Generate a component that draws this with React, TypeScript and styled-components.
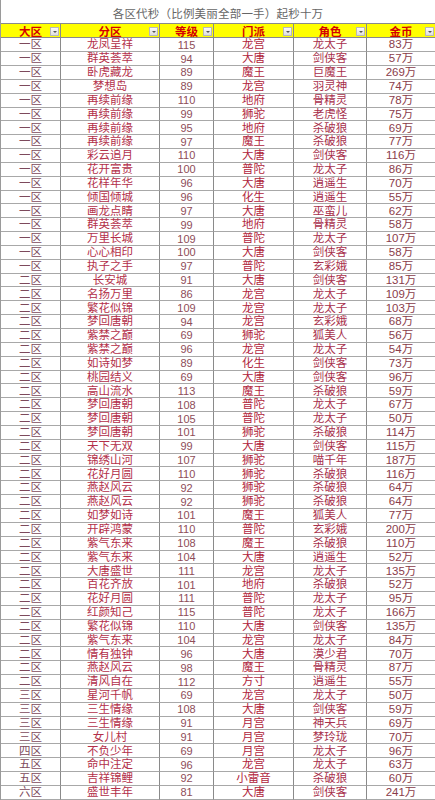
import styled, { createGlobalStyle } from "styled-components";

const GlobalStyle = createGlobalStyle`
  html, body {
    margin: 0;
    padding: 0;
    background: #ffffff;
  }
  body {
    font-family: "Liberation Sans", "Noto Sans CJK SC", sans-serif;
  }
`;

// 表格外框
const Sheet = styled.div`
  width: 435px;
  display: grid;
  grid-template-columns: 60px 99px 54px 80px 73px 69px;
  grid-template-rows: 24px 14.3px;
  grid-auto-rows: 13.85px;
  border-left: 1px solid #9a9a9a;
  box-sizing: border-box;
  overflow: hidden;
  height: 800px;
`;

// 标题
const Title = styled.div`
  grid-column: 1 / -1;
  display: flex;
  align-items: center;
  justify-content: center;
  padding-top: 3px;
  box-sizing: border-box;
  border-right: 1px solid #9a9a9a;
  border-bottom: 1px solid #8a8a8a;
  color: #666666;
  font-size: 11.5px;
  letter-spacing: 0.2px;
`;

// 表头
const HeadCell = styled.div`
  position: relative;
  display: flex;
  align-items: center;
  justify-content: center;
  background: #ffff00;
  color: #d40000;
  font-weight: bold;
  font-size: 11.5px;
  border-right: 1px solid #8a8a8a;
  border-bottom: 1px solid #8a8a8a;
  box-sizing: border-box;
`;

// 筛选按钮
const FilterButton = styled.span`
  position: absolute;
  right: 1px;
  top: 3px;
  width: 9px;
  height: 9px;
  box-sizing: border-box;
  border: 1px solid #b8b8b8;
  background: linear-gradient(#fafafa, #dedede);
  display: flex;
  align-items: center;
  justify-content: center;

  &::after {
    content: "";
    border-left: 2px solid transparent;
    border-right: 2px solid transparent;
    border-top: 2px solid #555;
  }
`;

// 单元格
const Cell = styled.div<{ $color: string; $num?: boolean }>`
  display: flex;
  align-items: center;
  justify-content: center;
  color: ${(p) => p.$color};
  font-size: ${(p) => (p.$num ? "11px" : "11.5px")};
  line-height: 1;
  white-space: nowrap;
  border-right: 1px solid #8a8a8a;
  border-bottom: 1px solid #a8a8a8;
  box-sizing: border-box;
  padding-top: 1px;
`;

type Row = [string, string, number, string, string, string];

const headers = ["大区", "分区", "等级", "门派", "角色", "金币"];
const colColors = ["#7d4a5c", "#b3304a", "#8e4d58", "#b0253c", "#a8304c", "#8a3c4a"];

const rows: Row[] = [
  ["一区", "龙凤呈祥", 115, "龙宫", "龙太子", "83万"],
  ["一区", "群英荟萃", 94, "大唐", "剑侠客", "57万"],
  ["一区", "卧虎藏龙", 89, "魔王", "巨魔王", "269万"],
  ["一区", "梦想岛", 89, "龙宫", "羽灵神", "74万"],
  ["一区", "再续前缘", 110, "地府", "骨精灵", "78万"],
  ["一区", "再续前缘", 99, "狮驼", "老虎怪", "75万"],
  ["一区", "再续前缘", 95, "地府", "杀破狼", "69万"],
  ["一区", "再续前缘", 97, "魔王", "杀破狼", "77万"],
  ["一区", "彩云追月", 110, "大唐", "剑侠客", "116万"],
  ["一区", "花开富贵", 100, "普陀", "龙太子", "86万"],
  ["一区", "花样年华", 96, "大唐", "逍遥生", "70万"],
  ["一区", "倾国倾城", 96, "化生", "逍遥生", "55万"],
  ["一区", "画龙点睛", 97, "大唐", "巫蛮儿", "62万"],
  ["一区", "群英荟萃", 99, "地府", "骨精灵", "58万"],
  ["一区", "万里长城", 109, "普陀", "龙太子", "107万"],
  ["一区", "心心相印", 100, "大唐", "剑侠客", "58万"],
  ["一区", "执子之手", 97, "普陀", "玄彩娥", "85万"],
  ["二区", "长安城", 91, "大唐", "剑侠客", "131万"],
  ["二区", "名扬万里", 86, "龙宫", "龙太子", "109万"],
  ["二区", "繁花似锦", 109, "龙宫", "龙太子", "103万"],
  ["二区", "梦回唐朝", 94, "龙宫", "玄彩娥", "68万"],
  ["二区", "紫禁之巅", 69, "狮驼", "狐美人", "56万"],
  ["二区", "紫禁之巅", 96, "龙宫", "龙太子", "54万"],
  ["二区", "如诗如梦", 89, "化生", "剑侠客", "73万"],
  ["二区", "桃园结义", 69, "大唐", "剑侠客", "96万"],
  ["二区", "高山流水", 113, "魔王", "杀破狼", "59万"],
  ["二区", "梦回唐朝", 108, "普陀", "龙太子", "67万"],
  ["二区", "梦回唐朝", 105, "普陀", "龙太子", "50万"],
  ["二区", "梦回唐朝", 101, "狮驼", "杀破狼", "114万"],
  ["二区", "天下无双", 99, "大唐", "剑侠客", "115万"],
  ["二区", "锦绣山河", 107, "狮驼", "喵千年", "187万"],
  ["二区", "花好月圆", 110, "狮驼", "杀破狼", "116万"],
  ["二区", "燕赵风云", 92, "狮驼", "杀破狼", "64万"],
  ["二区", "燕赵风云", 92, "狮驼", "杀破狼", "64万"],
  ["二区", "如梦如诗", 101, "魔王", "狐美人", "77万"],
  ["二区", "开辟鸿蒙", 110, "普陀", "玄彩娥", "200万"],
  ["二区", "紫气东来", 108, "魔王", "杀破狼", "110万"],
  ["二区", "紫气东来", 104, "大唐", "逍遥生", "52万"],
  ["二区", "大唐盛世", 111, "龙宫", "龙太子", "135万"],
  ["二区", "百花齐放", 101, "地府", "杀破狼", "52万"],
  ["二区", "花好月圆", 111, "普陀", "龙太子", "95万"],
  ["二区", "红颜知己", 115, "普陀", "龙太子", "166万"],
  ["二区", "繁花似锦", 110, "大唐", "剑侠客", "135万"],
  ["二区", "紫气东来", 104, "龙宫", "龙太子", "84万"],
  ["二区", "情有独钟", 96, "大唐", "漠少君", "70万"],
  ["二区", "燕赵风云", 98, "魔王", "骨精灵", "87万"],
  ["二区", "清风自在", 112, "方寸", "逍遥生", "55万"],
  ["三区", "星河千帆", 69, "龙宫", "龙太子", "50万"],
  ["三区", "三生情缘", 108, "大唐", "剑侠客", "59万"],
  ["三区", "三生情缘", 91, "月宫", "神天兵", "69万"],
  ["三区", "女儿村", 91, "月宫", "梦玲珑", "70万"],
  ["四区", "不负少年", 69, "月宫", "龙太子", "96万"],
  ["五区", "命中注定", 96, "龙宫", "龙太子", "63万"],
  ["五区", "吉祥锦鲤", 92, "小雷音", "杀破狼", "60万"],
  ["六区", "盛世丰年", 81, "大唐", "剑侠客", "241万"],
];

export default function App() {
  return (
    <>
      <GlobalStyle />
      <Sheet>
        <Title>各区代秒（比例美丽全部一手）起秒十万</Title>
        {headers.map((h) => (
          <HeadCell key={h}>
            {h}
            <FilterButton />
          </HeadCell>
        ))}
        {rows.map((row, i) =>
          row.map((value, j) => (
            <Cell key={`${i}-${j}`} $color={colColors[j]} $num={j === 2}>
              {value}
            </Cell>
          ))
        )}
      </Sheet>
    </>
  );
}
